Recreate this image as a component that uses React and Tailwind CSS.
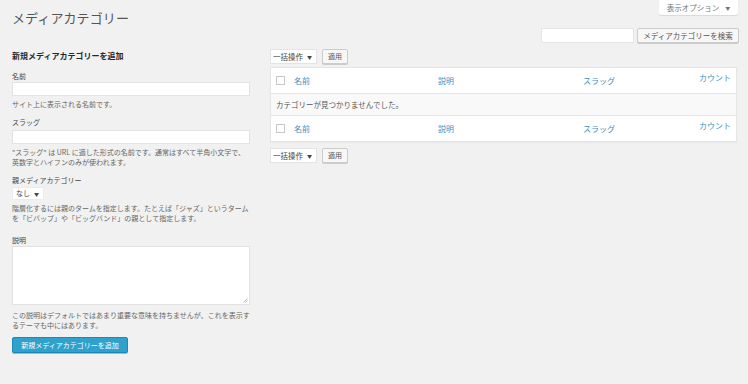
import React from "react";

const font = { fontFamily: '"Noto Sans CJK JP", "Noto Sans", sans-serif' };

function Checkbox() {
  return <div className="w-[9px] h-[9px] bg-white border border-[#c5c9cc] shrink-0" />;
}

function BulkActions() {
  return (
    <div className="flex items-center h-[15px] gap-[5px]">
      <div className="w-[47px] h-[15px] bg-white border border-[#e3e3e3] flex items-center pl-[2px] text-[7.5px] leading-[13px] text-[#444] whitespace-nowrap">
        一括操作<span className="ml-[4px] text-[5px]">▼</span>
      </div>
      <div className="w-[26px] h-[15px] bg-[#f7f7f7] border border-[#cccccc] rounded-[2px] flex items-center justify-center text-[7px] leading-[13px] text-[#555] shadow-[0_1px_0_#ccc]">
        適用
      </div>
    </div>
  );
}

function HeaderRow({ border }) {
  return (
    <div className={`h-[26px] flex items-center text-[8px] leading-[12px] text-[#3a90c4] ${border}`}>
      <div className="w-[23px] pl-[5px] flex items-center">
        <Checkbox />
      </div>
      <div className="w-[144px]">名前</div>
      <div className="w-[145px]">説明</div>
      <div className="flex-1">スラッグ</div>
      <div className="self-start pt-[4px] pr-[5px]">カウント</div>
    </div>
  );
}

export default function App() {
  return (
    <div className="w-[748px] h-[384px] bg-[#f1f1f1] overflow-hidden" style={font}>
      <div className="h-[28px] flex justify-between items-start pl-[12px] pr-[10px]">
        <div className="pt-[9px] text-[13px] leading-[18px] text-[#555] tracking-[0.1px]">メディアカテゴリー</div>
        <div className="w-[79px] h-[15px] bg-white rounded-b-[2px] shadow-[0_1px_1px_rgba(0,0,0,0.1)] flex items-center justify-center text-[7.5px] leading-[12px] text-[#72777c] whitespace-nowrap">
          表示オプション<span className="ml-[6px] text-[5px]">▼</span>
        </div>
      </div>
      <div className="flex pl-[12px] gap-[20px]">
        {/* Left column */}
        <div className="w-[238px] shrink-0 text-[#444]">
          <div className="mt-[22px] text-[8px] leading-[12px] font-bold text-[#23282d] whitespace-nowrap">新規メディアカテゴリーを追加</div>
          <div className="mt-[9px] text-[7px] leading-[10px] text-[#444]">名前</div>
          <div className="mt-[1px] h-[14px] bg-white border border-[#e2e2e2]" />
          <div className="mt-[3px] text-[7px] leading-[10px] text-[#666] whitespace-nowrap">サイト上に表示される名前です。</div>
          <div className="mt-[8px] text-[7px] leading-[10px] text-[#444]">スラッグ</div>
          <div className="mt-[3px] h-[14px] bg-white border border-[#e2e2e2]" />
          <div className="mt-[4px] text-[7px] leading-[9.5px] text-[#666] whitespace-nowrap">
            "スラッグ" は URL に適した形式の名前です。通常はすべて半角小文字で、
            <br />
            英数字とハイフンのみが使われます。
          </div>
          <div className="mt-[8px] text-[7px] leading-[10px] text-[#444]">親メディアカテゴリー</div>
          <div className="mt-[2px] w-[32px] h-[13px] bg-white border border-[#ececec] flex items-center pl-[3px] text-[7px] leading-[11px] text-[#444] whitespace-nowrap">
            なし<span className="ml-[4px] text-[5px]">▼</span>
          </div>
          <div className="mt-[4px] text-[7px] leading-[9.5px] text-[#666] whitespace-nowrap">
            階層化するには親のタームを指定します。たとえば「ジャズ」というターム
            <br />
            を「ビバップ」や「ビッグバンド」の親として指定します。
          </div>
          <div className="mt-[12px] text-[7px] leading-[10px] text-[#444]">説明</div>
          <div className="mt-[1px] h-[59px] bg-white border border-[#e2e2e2] flex items-end justify-end p-[1px]">
            <svg width="5" height="5" viewBox="0 0 5 5">
              <path d="M4.5 0.5 L0.5 4.5 M4.5 2.5 L2.5 4.5" stroke="#999" strokeWidth="0.7" />
            </svg>
          </div>
          <div className="mt-[5px] text-[7px] leading-[10px] text-[#666] whitespace-nowrap">
            この説明はデフォルトではあまり重要な意味を持ちませんが、これを表示す
            <br />
            るテーマも中にはあります。
          </div>
          <div className="mt-[7px] w-[116px] h-[16px] bg-[#2ea2cc] border border-[#1b8ab8] rounded-[2px] shadow-[0_1px_0_rgba(0,80,120,0.35)] flex items-center justify-center text-[7px] leading-[12px] text-white whitespace-nowrap">
            新規メディアカテゴリーを追加
          </div>
        </div>
        {/* Right column */}
        <div className="w-[469px] shrink-0">
          <div className="flex justify-end gap-[3px] h-[15px]">
            <div className="w-[93px] h-[15px] bg-white border border-[#e5e5e5]" />
            <div className="w-[102px] h-[15px] bg-[#f7f7f7] border border-[#cccccc] rounded-[2px] shadow-[0_1px_0_#ccc] flex items-center justify-center text-[7.5px] leading-[12px] text-[#555] whitespace-nowrap">
              メディアカテゴリーを検索
            </div>
          </div>
          <div className="mt-[6px]">
            <BulkActions />
          </div>
          <div className="mt-[3px] w-[467px] bg-white border border-[#e5e5e5] shadow-[0_1px_1px_rgba(0,0,0,0.04)]">
            <HeaderRow border="border-b border-[#e5e5e5]" />
            <div className="h-[21px] bg-[#f9f9f9] flex items-center pl-[5px] text-[7.5px] leading-[12px] text-[#555] whitespace-nowrap">
              カテゴリーが見つかりませんでした。
            </div>
            <HeaderRow border="border-t border-[#e5e5e5]" />
          </div>
          <div className="mt-[6px]">
            <BulkActions />
          </div>
        </div>
      </div>
    </div>
  );
}
